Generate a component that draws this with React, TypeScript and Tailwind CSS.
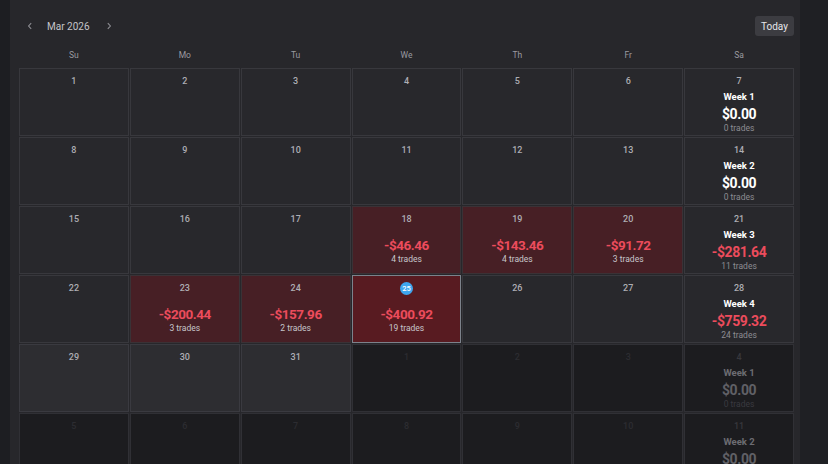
import React from "react";

type Day = {
  n: number;
  inMonth: boolean;
  pnl?: string;
  trades?: string;
  today?: boolean;
  light?: boolean;
};

type Week = {
  n: number;
  inMonth: boolean;
  label: string;
  amount: string;
  trades: string;
  neg?: boolean;
};

const rows: { days: Day[]; week: Week }[] = [
  {
    days: [1, 2, 3, 4, 5, 6].map((n) => ({ n, inMonth: true })),
    week: { n: 7, inMonth: true, label: "Week 1", amount: "$0.00", trades: "0 trades" },
  },
  {
    days: [8, 9, 10, 11, 12, 13].map((n) => ({ n, inMonth: true })),
    week: { n: 14, inMonth: true, label: "Week 2", amount: "$0.00", trades: "0 trades" },
  },
  {
    days: [
      { n: 15, inMonth: true },
      { n: 16, inMonth: true },
      { n: 17, inMonth: true },
      { n: 18, inMonth: true, pnl: "-$46.46", trades: "4 trades" },
      { n: 19, inMonth: true, pnl: "-$143.46", trades: "4 trades" },
      { n: 20, inMonth: true, pnl: "-$91.72", trades: "3 trades" },
    ],
    week: { n: 21, inMonth: true, label: "Week 3", amount: "-$281.64", trades: "11 trades", neg: true },
  },
  {
    days: [
      { n: 22, inMonth: true },
      { n: 23, inMonth: true, pnl: "-$200.44", trades: "3 trades" },
      { n: 24, inMonth: true, pnl: "-$157.96", trades: "2 trades" },
      { n: 25, inMonth: true, pnl: "-$400.92", trades: "19 trades", today: true },
      { n: 26, inMonth: true },
      { n: 27, inMonth: true },
    ],
    week: { n: 28, inMonth: true, label: "Week 4", amount: "-$759.32", trades: "24 trades", neg: true },
  },
  {
    days: [
      { n: 29, inMonth: true, light: true },
      { n: 30, inMonth: true, light: true },
      { n: 31, inMonth: true, light: true },
      { n: 1, inMonth: false },
      { n: 2, inMonth: false },
      { n: 3, inMonth: false },
    ],
    week: { n: 4, inMonth: false, label: "Week 1", amount: "$0.00", trades: "0 trades" },
  },
  {
    days: [5, 6, 7, 8, 9, 10].map((n) => ({ n, inMonth: false })),
    week: { n: 11, inMonth: false, label: "Week 2", amount: "$0.00", trades: "0 trades" },
  },
];

const dayNames = ["Su", "Mo", "Tu", "We", "Th", "Fr", "Sa"];

function DayCell({ d }: { d: Day }) {
  let cls = "border-[#38383d] bg-[#28282c]";
  if (!d.inMonth) cls = "border-[#303035] bg-[#1c1c1f]";
  else if (d.light) cls = "border-[#3a3a40] bg-[#2d2d31]";
  if (d.pnl) cls = "border-[#3a3236] bg-[#471f25]";
  if (d.today) cls = "border-[#7c828b] bg-[#581b21]";
  return (
    <div className={`h-[68px] border flex flex-col items-center pt-[6px] ${cls}`}>
      {d.today ? (
        <div className="w-[13px] h-[13px] rounded-full bg-[#3ea6ee] flex items-center justify-center text-[7.5px] font-medium leading-none text-white">
          {d.n}
        </div>
      ) : (
        <div
          className={`h-[13px] text-[9px] leading-[13px] font-medium ${
            d.inMonth ? "text-[#aeaeb4]" : "text-[#2c2c31]"
          }`}
        >
          {d.n}
        </div>
      )}
      {d.pnl && (
        <>
          <div className="mt-[11px] text-[13.5px] leading-[16px] font-bold tracking-[-0.45px] text-[#ec4c5c]">
            {d.pnl}
          </div>
          <div className="mt-[1px] text-[8.5px] leading-[11px] text-[#c6c6cb]">{d.trades}</div>
        </>
      )}
    </div>
  );
}

function WeekCell({ w }: { w: Week }) {
  const dim = !w.inMonth;
  return (
    <div
      className={`h-[68px] border flex flex-col items-center pt-[6px] ${
        dim ? "border-[#303035] bg-[#1c1c1f]" : "border-[#38383d] bg-[#28282c]"
      }`}
    >
      <div
        className={`h-[13px] text-[9px] leading-[13px] font-medium ${
          dim ? "text-[#38383d]" : "text-[#aeaeb4]"
        }`}
      >
        {w.n}
      </div>
      <div
        className={`mt-[3px] text-[9.5px] leading-[11px] font-bold ${
          dim ? "text-[#6c6c72]" : "text-white"
        }`}
      >
        {w.label}
      </div>
      <div
        className={`mt-[4px] text-[14px] leading-[17px] font-bold tracking-[-0.4px] ${
          dim ? "text-[#606066]" : w.neg ? "text-[#ec4c5c]" : "text-white"
        }`}
      >
        {w.amount}
      </div>
      <div
        className={`text-[8.5px] leading-[11px] ${dim ? "text-[#3a3a40]" : "text-[#8c8c92]"}`}
      >
        {w.trades}
      </div>
    </div>
  );
}

export default function App() {
  return (
    <div
      className="w-[828px] h-[464px] overflow-hidden flex bg-[#1e1f23]"
      style={{ fontFamily: "Roboto, 'Liberation Sans', sans-serif" }}
    >
      <div className="w-[10px] shrink-0 bg-[#1d1e22]" />
      <div className="w-[790px] shrink-0 bg-[#27272b] pl-[9px] pr-[6px]">
        <div className="pt-[16px] h-[20px] box-content flex items-center justify-between">
          <div className="flex items-center pl-[7px]">
            <svg width="8" height="8" viewBox="0 0 8 8" className="text-[#8e8e94]">
              <path d="M5.2 1.2 L2.6 4 L5.2 6.8" fill="none" stroke="currentColor" strokeWidth="1.1" />
            </svg>
            <span className="ml-[13px] text-[10px] text-[#c4c4c9]">Mar 2026</span>
            <svg width="8" height="8" viewBox="0 0 8 8" className="ml-[15px] text-[#8e8e94]">
              <path d="M2.8 1.2 L5.4 4 L2.8 6.8" fill="none" stroke="currentColor" strokeWidth="1.1" />
            </svg>
          </div>
          <button className="h-[20px] w-[39px] rounded-[3px] bg-[#3c3c41] text-[10px] text-[#e6e6ea] flex items-center justify-center">
            Today
          </button>
        </div>
        <div className="mt-[12px] grid grid-cols-7 gap-px h-[14px]">
          {dayNames.map((n) => (
            <div key={n} className="text-center text-[8.5px] leading-[14px] text-[#9a9aa0]">
              {n}
            </div>
          ))}
        </div>
        <div className="mt-[6px] grid grid-cols-7 gap-px">
          {rows.map((r, i) => (
            <React.Fragment key={i}>
              {r.days.map((d, j) => (
                <DayCell key={j} d={d} />
              ))}
              <WeekCell w={r.week} />
            </React.Fragment>
          ))}
        </div>
      </div>
      <div className="flex-1 bg-[#1f2024]" />
    </div>
  );
}
